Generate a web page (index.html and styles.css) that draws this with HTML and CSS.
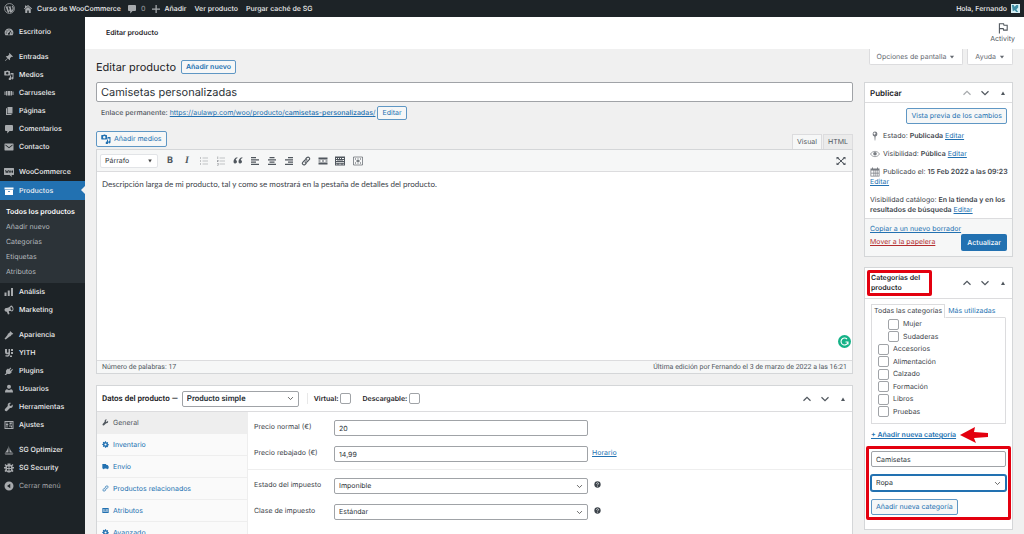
FILE: index.html
```
<!DOCTYPE html>
<html lang="es">
<head>
<meta charset="UTF-8">
<meta name="viewport" content="width=device-width, initial-scale=1.0">
<title>Editar producto</title>
<link rel="stylesheet" href="styles.css">
</head>
<body>

<svg class="sprite" aria-hidden="true">
<symbol id="i-wp" viewBox="0 0 20 20"><circle cx="10" cy="10" r="9" fill="none" stroke="currentColor" stroke-width="1.4"/><path d="M3 6.500h4.500v1H6.500l2.400 7 1.300-3.700L9 7.500H8v-1h5v1h-1l2.400 7 1.200-4c.6-2-1.300-2.700-1-4.300.1-.8.700-1.100 1.200-1.100A7.800 7.800 0 0 1 14 16.700l-3.200.9-.6-4-1.400 4.200-2-.6z"/></symbol>
<symbol id="i-home" viewBox="0 0 20 20"><path d="M10 2l8 7-1.200 1.400L10 4.600l-6.800 5.800L2 9zM4 3h2.500v3L4 8zM4.500 10.500L10 6l5.500 4.500V18h-4v-5h-3v5h-4z"/></symbol>
<symbol id="i-comment" viewBox="0 0 20 20"><path d="M4 2h12c1 0 2 1 2 2v8c0 1-1 2-2 2h-5l-4.500 5v-5H4c-1 0-2-1-2-2V4c0-1 1-2 2-2z"/></symbol>
<symbol id="i-plus" viewBox="0 0 20 20"><path d="M9 2h2.500v7H18v2.500h-6.500V18H9v-6.500H2V9h7z"/></symbol>
<symbol id="i-dash" viewBox="0 0 20 20"><path fill-rule="evenodd" d="M10 3a8.500 8.500 0 0 1 7 13.500H3A8.500 8.500 0 0 1 10 3zm-1 2v2h2V5zM5 7v2h2V7zm8 0l-3 4.500a2 2 0 1 0 1.500.8L14.500 8zM3.500 11v2h2v-2zm11 0v2h2v-2z"/></symbol>
<symbol id="i-pin" viewBox="0 0 20 20"><path d="M11 2l7 7-1.500 1-1.500-.5-3 3c.5 1.500.2 3-.8 4L7.700 13 3 18l-1-1 5-4.700L3.500 9c1-1 2.500-1.300 4-.8l3-3L10 3.500z"/></symbol>
<symbol id="i-media" viewBox="0 0 20 20"><path fill-rule="evenodd" d="M3 2h2l.6-1h2.800L9 2h2c.6 0 1 .4 1 1v7c0 .6-.4 1-1 1H1.500c-.6 0-1-.4-1-1V3c0-.6.400-1 1-1zm3.500 2a2.500 2.500 0 1 0 0 5 2.500 2.500 0 0 0 0-5zM13 6h6v10.500a2.300 2.300 0 1 1-2-2.300V9h-3v8.500a2.300 2.300 0 1 1-4.500 0 2.200 2.200 0 0 1 2.500-2.300V12h1z"/></symbol>
<symbol id="i-car" viewBox="0 0 20 20"><path d="M1 7h2v7H1zM4 6h2v9H4zM7 6h6v9H7zM14 6h2v9h-2zM17 7h2v7h-2z"/></symbol>
<symbol id="i-pages" viewBox="0 0 20 20"><path d="M7 2h10v13H7zM4 4.500h2V16h9v2H4z"/></symbol>
<symbol id="i-mail" viewBox="0 0 20 20"><path fill-rule="evenodd" d="M2 3h16c.6 0 1 .4 1 1v12c0 .6-.4 1-1 1H2c-.6 0-1-.4-1-1V4c0-.6.4-1 1-1zm1 2v2l7 5.500L17 7V5l-7 5.300z"/></symbol>
<symbol id="i-woo" viewBox="0 0 20 20"><path fill-rule="evenodd" d="M1 2h18c.6 0 1 .4 1 1v12c0 .6-.4 1-1 1h-4l1 4-5-4H1c-.6 0-1-.4-1-1V3c0-.6.4-1 1-1zm1.500 4l1.200 6H5l1-3 1 3h1.300l1.200-6H8.200l-.6 3.500L6.600 7H5.400l-1 2.500L3.800 6zM12 6.500c-2.200 0-2.200 5.500 0 5.500s2.200-5.500 0-5.500zm4.500 0c-2.200 0-2.200 5.500 0 5.500s2.200-5.500 0-5.500z"/></symbol>
<symbol id="i-box" viewBox="0 0 20 20"><path fill-rule="evenodd" d="M1 3h18v4H1zM2 8h16v10H2zm6 2v1.500h4V10z"/></symbol>
<symbol id="i-bars" viewBox="0 0 20 20"><path d="M1 11h4v7H1zM7.500 7h4v11h-4zM14 2h4v16h-4z"/></symbol>
<symbol id="i-horn" viewBox="0 0 20 20"><path fill-rule="evenodd" d="M14 1c3 0 5 4 5 7s-1.500 5-3.500 5c-2-1-4-1-6-.7L11 18l-3 1-2.300-5.500C3 14 1 12 1 9.500 1 7 3 6 5 6c4-.5 6-2 9-5zm-.5 3c-1.500 2 0 6 2 7 1.500-1 2-2 1.500-4-.500-2-2-3.500-3.500-3z"/></symbol>
<symbol id="i-brush" viewBox="0 0 20 20"><path d="M12 2l6.500 5.500L17 9l-1-.3-3 3.800c-1-.5-2-.2-2.500 1L3.500 19 1 17.500l5.500-7c1-.5 1.300-1.500.8-2.500L11.500 5z"/></symbol>
<symbol id="i-yith" viewBox="0 0 20 20"><path d="M2 2h4v6c0 2 3 2 3 0V2h3v9c0 6-4 7-9 6v-3c3 1 6 1 6-2-4 1.500-7 0-7-4zM14 2h4v4h-4zM14 8h4v4h-4zM12 15h4v3h-4z"/></symbol>
<symbol id="i-plug" viewBox="0 0 20 20"><path d="M13 3l1.500 1.500L11.500 8l1.500 1.500L16.500 6 18 7.500 14.500 11l1 1c-2 4-6 5-9 3.500L4 18H1l3.500-4C3 11 4 7 8 5l1.500 1.500z"/></symbol>
<symbol id="i-user" viewBox="0 0 20 20"><path d="M10 1.500a4 4 0 1 1 0 8 4 4 0 0 1 0-8zM6 10.500l4 2 4-2c3 0 4 2.500 4 6.500H2c0-4 1-6.500 4-6.500z"/></symbol>
<symbol id="i-tool" viewBox="0 0 20 20"><path d="M17 5l-3 3-2.500-.5L11 5l3-3c-3-1-6 .5-6.500 3v3L2 14c-2 2.500 1.500 5.500 4 4l6-6c4 1 7-3 5-7z"/></symbol>
<symbol id="i-set" viewBox="0 0 20 20"><path fill-rule="evenodd" d="M1 2h18v16H1zm2 2v12h14V4zM5 5h2v3h1.500v2H7v5H5v-5H4V8h1zM11 5h5v2h-1v2h-4zM10 11h6v4h-2v-2h-4z"/></symbol>
<symbol id="i-sgo" viewBox="0 0 20 20"><path d="M9 1v14H2C6 12 8 7 9 1zM11 4c1 6 3 9 7 11h-7zM1 17h18l-2 2H3z"/></symbol>
<symbol id="i-gear" viewBox="0 0 20 20"><path fill-rule="evenodd" d="M8.500 1h3l.5 2.500 1.500.6 2.200-1.400 2 2-1.300 2.200.6 1.600 2.500.5v3l-2.500.5-.6 1.500 1.400 2.200-2 2-2.300-1.300-1.500.6L11.500 19h-3L8 16.500l-1.500-.6-2.200 1.400-2-2 1.300-2.300L3 11.500.5 11V8.500L3 8l.6-1.500-1.400-2.200 2-2 2.300 1.300L8 3.300zM10 7a3 3 0 1 0 0 6 3 3 0 0 0 0-6z"/></symbol>
<symbol id="i-bug" viewBox="0 0 20 20"><path fill-rule="evenodd" d="M7 1h6v3h2l2-2 2 2-2 2v2h3v3h-3v2l2 3-2 2-2-1-3 2H8l-3-2-2 1-2-2 2-3v-2H0V8h3V6L1 4l2-2 2 2h2zM6 7v3h3V7zm5 0v3h3V7zm-5 5v3h3v-3zm5 0v3h3v-3z"/></symbol>
<symbol id="i-back" viewBox="0 0 20 20"><path fill-rule="evenodd" d="M10 1a9 9 0 1 1 0 18 9 9 0 0 1 0-18zm2.500 4.500L6 10l6.500 4.500z"/></symbol>
<symbol id="i-up" viewBox="0 0 20 20"><path d="M3 13.500l7-7 7 7" fill="none" stroke="currentColor" stroke-width="2.400"/></symbol>
<symbol id="i-down" viewBox="0 0 20 20"><path d="M3 6.500l7 7 7-7" fill="none" stroke="currentColor" stroke-width="2.400"/></symbol>
<symbol id="i-tri" viewBox="0 0 20 20"><path d="M6 14l4-7 4 7z"/></symbol>
<symbol id="i-trid" viewBox="0 0 20 20"><path d="M3 6h14l-7 9z"/></symbol>
<symbol id="i-flag" viewBox="0 0 20 20"><path d="M4 19V3h7l.6 2.500H17v8h-6L10.400 11H4" fill="none" stroke="currentColor" stroke-width="1.800"/></symbol>
<symbol id="i-ul" viewBox="0 0 20 20"><path d="M2 3h2v2H2zM2 9h2v2H2zM2 15h2v2H2zM7 3.300h11v1.300H7zM7 9.300h11v1.300H7zM7 15.300h11v1.300H7z"/></symbol>
<symbol id="i-ol" viewBox="0 0 20 20"><path d="M3 1h1.300v5H3zM2 8h3v1.500L3.500 11H5v1H2v-1l1.500-2H2zM2 14h3v5H2v-1h2v-1H3v-1h1v-1H2zM7 3.300h11v1.300H7zM7 9.300h11v1.300H7zM7 15.300h11v1.300H7z"/></symbol>
<symbol id="i-quote" viewBox="0 0 20 20"><path d="M9 4C6 5 5.500 6.500 5.500 8.200A3.500 3.500 0 1 1 1 12C1 7 3.500 3.500 8.500 2.500zM19 4c-3 1-3.500 2.500-3.500 4.200A3.500 3.500 0 1 1 11 12c0-5 2.500-8.500 7.500-9.500z"/></symbol>
<symbol id="i-left" viewBox="0 0 20 20"><path d="M2 2h10v2.300H2zM2 6.500h16v2.300H2zM2 11h10v2.300H2zM2 15.500h16v2.300H2z"/></symbol>
<symbol id="i-center" viewBox="0 0 20 20"><path d="M5 2h10v2.300H5zM2 6.500h16v2.300H2zM5 11h10v2.300H5zM2 15.500h16v2.300H2z"/></symbol>
<symbol id="i-right" viewBox="0 0 20 20"><path d="M8 2h10v2.300H8zM2 6.500h16v2.300H2zM8 11h10v2.300H8zM2 15.500h16v2.300H2z"/></symbol>
<symbol id="i-link" viewBox="0 0 20 20"><path d="M9 6l3-3c3-2.500 7 1.500 4.500 4.500l-4 4c-1.500 1.500-3.500 1.500-5 0M11 14l-3 3c-3 2.500-7-1.500-4.500-4.500l4-4c1.500-1.500 3.500-1.500 5 0" fill="none" stroke="currentColor" stroke-width="2.200"/></symbol>
<symbol id="i-more" viewBox="0 0 20 20"><path d="M1 3h18v4H1zM1 9h4v2H1zM8 9h4v2H8zM15 9h4v2h-4zM1 13h18v4H1z"/></symbol>
<symbol id="i-keys" viewBox="0 0 20 20"><path fill-rule="evenodd" d="M0 1h20v18H0zm2 3v2h2V4zm4 0v2h2V4zm4 0v2h2V4zm4 0v2h4V4zM2 8v2h3V8zm5 0v2h2V8zm4 0v2h2V8zm4 0v2h3V8zM2 12v1.500h16V12zm0 3.500V17h3v-1.500zm5 0V17h6v-1.500zm8 0V17h3v-1.500z"/></symbol>
<symbol id="i-short" viewBox="0 0 20 20"><path d="M1 2h18v16H1z" fill="none" stroke="currentColor" stroke-width="1.300"/><path d="M4 5h2v2H4zM9 5h2v2H9zM14 5h2v2h-2zM4 13h2v2H4zM9 13h2v2H9zM14 13h2v2h-2zM7 8.500h6v3H7z"/></symbol>
<symbol id="i-full" viewBox="0 0 20 20"><path d="M1 2h5L4.700 3.500 8.500 7 7 8.500 3 5 1 7zM19 2h-5l1.300 1.500L11.500 7 13 8.500 17 5l2 2zM1 18h5l-1.300-1.500L8.500 13 7 11.500 3 15l-2-2zM19 18h-5l1.300-1.500L11.500 13l1.500-1.500 4 3.500 2-2zM8 8h4v4H8z"/></symbol>
<symbol id="i-post" viewBox="0 0 20 20"><path fill-rule="evenodd" d="M10 1a5 5 0 0 1 1.200 9.800L10.500 19h-1l-.7-8.200A5 5 0 0 1 10 1zM9 3a2 2 0 1 0 .1 0z"/></symbol>
<symbol id="i-eye" viewBox="0 0 20 20"><path d="M1 10c4-7 14-7 18 0-4 7-14 7-18 0z" fill="none" stroke="currentColor" stroke-width="1.400"/><circle cx="10" cy="9.500" r="3.600"/></symbol>
<symbol id="i-cal" viewBox="0 0 20 20"><path fill-rule="evenodd" d="M1 3h3V1h2v2h8V1h2v2h3v16H1zm1.500 4v4.500H6V7zM7 7v4.500h2.500V7zm4 0v4.500h2.500V7zm4 0v4.500h2.500V7zM2.500 13v4.500H6V13zM7 13v4.500h2.500V13zm4 0v4.500h2.500V13zm4 0v4.500h2.500V13z"/></symbol>
<symbol id="i-truck" viewBox="0 0 20 20"><path d="M1 3h11v3h4l3 4v6h-2a2 2 0 0 1-4 0H7a2 2 0 0 1-4 0H1z"/></symbol>
<symbol id="i-card" viewBox="0 0 20 20"><path fill-rule="evenodd" d="M1 3h18v14H1zm2 4v3h5V7zm7 0v1.500h7V7zm0 3v1.500h7V10zm-7 3v1.500h14V13z"/></symbol>
<symbol id="i-help" viewBox="0 0 20 20"><circle cx="10" cy="10" r="9"/><path d="M7 8c0-4 6-4 6-.5 0 2-3 2-3 4.500M10 13.500V16" fill="none" stroke="#fff" stroke-width="2"/></symbol>
</svg>

<header class="adminbar">
<a href="#" class="bar-logo" aria-label="WordPress"><svg class="icon"><use href="#i-wp"/></svg></a>
<a href="#" class="bar-site"><svg class="icon"><use href="#i-home"/></svg>Curso de WooCommerce</a>
<a href="#" class="bar-comments"><svg class="icon"><use href="#i-comment"/></svg>0</a>
<a href="#" class="bar-new"><svg class="icon"><use href="#i-plus"/></svg>Añadir</a>
<a href="#">Ver producto</a>
<a href="#">Purgar caché de SG</a>
<a href="#" class="bar-user">Hola, Fernando
<svg class="avatar" viewBox="0 0 10 10"><rect width="10" height="10" fill="#d5eef3"/><path d="M1 1h2l1 2 2-2h2v3L6 6l2 3H6L4 7 2 8z" fill="#3f8fa6"/></svg></a>
</header>

<div class="layout">
<nav class="menu">
<a href="#"><svg class="icon"><use href="#i-dash"/></svg>Escritorio</a>
<a href="#" class="gap"><svg class="icon"><use href="#i-pin"/></svg>Entradas</a>
<a href="#"><svg class="icon"><use href="#i-media"/></svg>Medios</a>
<a href="#"><svg class="icon"><use href="#i-car"/></svg>Carruseles</a>
<a href="#"><svg class="icon"><use href="#i-pages"/></svg>Páginas</a>
<a href="#"><svg class="icon"><use href="#i-comment"/></svg>Comentarios</a>
<a href="#"><svg class="icon"><use href="#i-mail"/></svg>Contacto</a>
<a href="#" class="gap"><svg class="icon"><use href="#i-woo"/></svg>WooCommerce</a>
<a href="#" class="current"><svg class="icon"><use href="#i-box"/></svg>Productos</a>
<div class="submenu">
<a href="#" class="active">Todos los productos</a>
<a href="#">Añadir nuevo</a>
<a href="#">Categorías</a>
<a href="#">Etiquetas</a>
<a href="#">Atributos</a>
</div>
<a href="#"><svg class="icon"><use href="#i-bars"/></svg>Análisis</a>
<a href="#"><svg class="icon"><use href="#i-horn"/></svg>Marketing</a>
<a href="#" class="gap"><svg class="icon"><use href="#i-brush"/></svg>Apariencia</a>
<a href="#"><svg class="icon"><use href="#i-yith"/></svg>YITH</a>
<a href="#"><svg class="icon"><use href="#i-plug"/></svg>Plugins</a>
<a href="#"><svg class="icon"><use href="#i-user"/></svg>Usuarios</a>
<a href="#"><svg class="icon"><use href="#i-tool"/></svg>Herramientas</a>
<a href="#"><svg class="icon"><use href="#i-set"/></svg>Ajustes</a>
<a href="#" class="gap"><svg class="icon"><use href="#i-sgo"/></svg>SG Optimizer</a>
<a href="#"><svg class="icon"><use href="#i-bug"/></svg>SG Security</a>
<button type="button" class="collapse"><svg class="icon"><use href="#i-back"/></svg>Cerrar menú</button>
</nav>

<main class="content">
<div class="page-header">
<strong>Editar producto</strong>
<button type="button" class="activity"><svg class="icon"><use href="#i-flag"/></svg>Activity</button>
</div>

<div class="wrap">
<div class="main-col">
<div class="heading">
<h1>Editar producto</h1>
<a href="#" class="button small bold">Añadir nuevo</a>
</div>
<input type="text" class="title-input" value="Camisetas personalizadas" aria-label="Nombre del producto">
<div class="permalink">
<strong>Enlace permanente:</strong>
<a href="#">https://aulawp.com/woo/producto/<b>camisetas-personalizadas</b>/</a>
<button type="button" class="button small">Editar</button>
</div>

<div class="editor-top">
<button type="button" class="button media"><svg class="icon"><use href="#i-media"/></svg>Añadir medios</button>
<div class="editor-tabs">
<button type="button" class="on">Visual</button>
<button type="button">HTML</button>
</div>
</div>
<section class="editor">
<div class="toolbar">
<select aria-label="Formato"><option>Párrafo</option></select>
<button type="button" class="letter" aria-label="Negrita"><b>B</b></button>
<button type="button" class="letter italic" aria-label="Cursiva"><i>I</i></button>
<button type="button" class="soft" aria-label="Lista"><svg class="icon"><use href="#i-ul"/></svg></button>
<button type="button" class="soft" aria-label="Lista numerada"><svg class="icon"><use href="#i-ol"/></svg></button>
<button type="button" aria-label="Cita"><svg class="icon"><use href="#i-quote"/></svg></button>
<button type="button" aria-label="Izquierda"><svg class="icon"><use href="#i-left"/></svg></button>
<button type="button" aria-label="Centro"><svg class="icon"><use href="#i-center"/></svg></button>
<button type="button" aria-label="Derecha"><svg class="icon"><use href="#i-right"/></svg></button>
<button type="button" aria-label="Enlace"><svg class="icon"><use href="#i-link"/></svg></button>
<button type="button" aria-label="Leer más"><svg class="icon"><use href="#i-more"/></svg></button>
<button type="button" aria-label="Barra de herramientas"><svg class="icon"><use href="#i-keys"/></svg></button>
<button type="button" class="split" aria-label="Shortcodes"><svg class="icon"><use href="#i-short"/></svg></button>
<button type="button" class="full" aria-label="Pantalla completa"><svg class="icon"><use href="#i-full"/></svg></button>
</div>
<div class="editor-body">
<p>Descripción larga de mi producto, tal y como se mostrará en la pestaña de detalles del producto.</p>
<svg class="grammar" viewBox="0 0 26 26"><circle cx="13" cy="13" r="13" fill="#15b287"/><path d="M18 8a7 7 0 1 0 2 6h-5M20 14v5" fill="none" stroke="#fff" stroke-width="2.200"/></svg>
</div>
<div class="status"><span>Número de palabras: 17</span><span>Última edición por Fernando el 3 de marzo de 2022 a las 16:21</span></div>
</section>

<section class="box product">
<div class="product-head">
<label for="type" class="product-title">Datos del producto —</label>
<select id="type"><option>Producto simple</option></select>
<label class="check first">Virtual: <input type="checkbox"></label>
<label class="check">Descargable: <input type="checkbox"></label>
<div class="handles"><svg class="icon"><use href="#i-up"/></svg><svg class="icon"><use href="#i-down"/></svg><svg class="icon"><use href="#i-tri"/></svg></div>
</div>
<div class="product-body">
<div class="product-tabs">
<a href="#" class="on"><svg class="icon"><use href="#i-tool"/></svg>General</a>
<a href="#"><svg class="icon"><use href="#i-gear"/></svg>Inventario</a>
<a href="#"><svg class="icon"><use href="#i-truck"/></svg>Envío</a>
<a href="#"><svg class="icon"><use href="#i-link"/></svg>Productos relacionados</a>
<a href="#"><svg class="icon"><use href="#i-card"/></svg>Atributos</a>
<a href="#"><svg class="icon"><use href="#i-gear"/></svg>Avanzado</a>
</div>
<div class="product-panel">
<div class="fields">
<label for="price">Precio normal (€)</label><input type="text" id="price" value="20"><span></span>
<label for="sale">Precio rebajado (€)</label><input type="text" id="sale" value="14,99"><a href="#">Horario</a>
</div>
<div class="fields">
<label for="tax">Estado del impuesto</label><select id="tax"><option>Imponible</option></select><svg class="icon help"><use href="#i-help"/></svg>
<label for="class">Clase de impuesto</label><select id="class"><option>Estándar</option></select><svg class="icon help"><use href="#i-help"/></svg>
</div>
</div>
</div>
</section>
</div>

<aside class="side-col">
<div class="screen-tabs">
<button type="button">Opciones de pantalla <svg class="icon"><use href="#i-trid"/></svg></button>
<button type="button">Ayuda <svg class="icon"><use href="#i-trid"/></svg></button>
</div>

<section class="box publish">
<div class="box-head">
<h2>Publicar</h2>
<div class="handles"><svg class="icon dim"><use href="#i-up"/></svg><svg class="icon"><use href="#i-down"/></svg><svg class="icon"><use href="#i-tri"/></svg></div>
</div>
<div class="publish-body">
<button type="button" class="button preview">Vista previa de los cambios</button>
<p><svg class="icon"><use href="#i-post"/></svg>Estado: <b>Publicada</b> <a href="#">Editar</a></p>
<p><svg class="icon"><use href="#i-eye"/></svg>Visibilidad: <b>Pública</b> <a href="#">Editar</a></p>
<p><svg class="icon"><use href="#i-cal"/></svg>Publicado el: <b>15 Feb 2022 a las 09:23</b> <a href="#">Editar</a></p>
<p>Visibilidad catálogo: <b>En la tienda y en los resultados de búsqueda</b> <a href="#">Editar</a></p>
</div>
<div class="publish-foot">
<a href="#">Copiar a un nuevo borrador</a>
<div class="foot-row">
<a href="#" class="trash">Mover a la papelera</a>
<button type="button" class="primary">Actualizar</button>
</div>
</div>
</section>

<section class="box cats">
<div class="box-head">
<h2 class="marked">Categorías del producto</h2>
<div class="handles"><svg class="icon"><use href="#i-up"/></svg><svg class="icon"><use href="#i-down"/></svg><svg class="icon"><use href="#i-tri"/></svg></div>
</div>
<div class="cats-body">
<div class="cat-tabs"><a href="#" class="on">Todas las categorías</a><a href="#">Más utilizadas</a></div>
<div class="cat-list">
<label class="child"><input type="checkbox">Mujer</label>
<label class="child"><input type="checkbox">Sudaderas</label>
<label><input type="checkbox">Accesorios</label>
<label><input type="checkbox">Alimentación</label>
<label><input type="checkbox">Calzado</label>
<label><input type="checkbox">Formación</label>
<label><input type="checkbox">Libros</label>
<label><input type="checkbox">Pruebas</label>
</div>
<div class="add-line">
<a href="#">+ Añadir nueva categoría</a>
<svg class="arrow" viewBox="0 0 28 16"><path d="M0 8L15 0l-1 5 14 1v4l-14 1 2 5z" fill="#e3000f"/></svg>
</div>
<div class="new-cat">
<input type="text" value="Camisetas" aria-label="Nueva categoría">
<select class="focused" aria-label="Categoría superior"><option>Ropa</option></select>
<button type="button" class="button">Añadir nueva categoría</button>
</div>
</div>
</section>
</aside>
</div>
</main>
</div>

</body>
</html>
```

FILE: styles.css
```
* {
box-sizing: border-box;
}
body {
font-family: Inter, "Liberation Sans", sans-serif;
font-size: 7px;
line-height: 10px;
text-rendering: geometricPrecision;
background: #f0f0f0;
color: #3c434a;
margin: 0;
height: 100vh;
overflow: hidden;
}
h1, h2, p {
margin: 0;
}
a {
color: #2271b1;
}
button, input, select {
font: inherit;
color: inherit;
text-rendering: inherit;
margin: 0;
}
button {
background: none;
border: none;
padding: 0;
}
.sprite {
display: none;
}
.icon {
width: 10px;
height: 10px;
fill: currentColor;
flex: none;
}
input[type="text"], select {
border: 1px solid #a0a3a7;
border-radius: 2px;
background: #fff;
color: #2c3338;
padding: 0 4px;
height: 16px;
min-width: 0;
}
select {
appearance: none;
background: #fff url("data:image/svg+xml,%3Csvg xmlns='http://www.w3.org/2000/svg' viewBox='0 0 20 20'%3E%3Cpath d='M3 6l7 7 7-7' fill='none' stroke='%23555' stroke-width='2.500'/%3E%3C/svg%3E") no-repeat right 4px center / 7px 7px;
}
input[type="checkbox"] {
appearance: none;
width: 11px;
height: 11px;
border: 1px solid #a0a3a7;
border-radius: 2px;
background: #fff;
flex: none;
}

/* barra superior */
.adminbar {
display: flex;
align-items: center;
height: 17px;
padding: 0 4px;
background: #1d2327;
}
.adminbar a {
display: flex;
align-items: center;
gap: 4px;
margin-right: 8px;
color: #f0f0f1;
font-weight: 500;
text-decoration: none;
}
.adminbar .icon {
color: #a7aaad;
}
.adminbar .bar-logo {
margin-right: 8px;
}
.bar-logo .icon {
width: 11px;
height: 11px;
}
.adminbar .bar-comments {
color: #8c8f94;
margin-right: 5px;
}
.adminbar .bar-site {
margin-right: 6px;
}
.adminbar .bar-user {
margin: 0 0 0 auto;
}
.avatar {
width: 9px;
height: 9px;
}

/* menu lateral */
.layout {
display: flex;
height: calc(100vh - 17px);
}
.menu {
width: 85px;
flex: none;
padding-top: 6px;
background: #1d2327;
}
.menu > a, .collapse {
display: flex;
align-items: center;
gap: 5px;
width: 100%;
height: 18px;
padding-left: 4px;
color: #f0f0f1;
font-weight: 500;
text-decoration: none;
}
.menu .icon {
color: #a7aaad;
}
.menu > .gap {
margin-top: 7px;
}
.menu > .current {
position: relative;
height: 19px;
background: #2271b1;
}
.menu .current .icon {
color: #fff;
}
.current::after {
content: "";
position: absolute;
right: 0;
top: 5px;
border: 4px solid transparent;
border-right-color: #f0f0f0;
border-left: 0;
}
.submenu {
display: flex;
flex-direction: column;
padding: 4px 0 4px 6px;
background: #2c3338;
}
.submenu a {
line-height: 15px;
color: #b4b9be;
text-decoration: none;
}
.submenu .active {
color: #fff;
font-weight: 600;
}
.collapse {
color: #a7aaad;
font-weight: 400;
}

/* cabecera */
.content {
flex: 1;
min-width: 0;
}
.page-header {
display: flex;
align-items: center;
justify-content: space-between;
height: 32px;
padding: 0 9px 0 21px;
background: #fff;
color: #1d2327;
}
.page-header strong {
font-weight: 600;
}
.activity {
display: flex;
flex-direction: column;
align-items: center;
color: #50575e;
}
.activity .icon {
width: 12px;
height: 12px;
}
.wrap {
display: flex;
align-items: flex-start;
gap: 11px;
padding: 0 11px;
}
.main-col {
flex: 1;
min-width: 0;
}
.side-col {
width: 149px;
flex: none;
}
.button {
display: inline-flex;
align-items: center;
justify-content: center;
height: 16px;
padding: 0 4px;
border: 1px solid #5f97c4;
border-radius: 2px;
background: #f6f7f7;
color: #2271b1;
text-decoration: none;
}
.button.small {
height: 14px;
}
.bold {
font-weight: 600;
}
.heading {
display: flex;
align-items: center;
gap: 5px;
padding: 11px 0 8px;
}
h1 {
font-size: 11px;
line-height: 14px;
font-weight: 400;
color: #1d2327;
}
input.title-input {
width: 100%;
height: 20px;
font-size: 11px;
}
.permalink {
display: flex;
align-items: center;
gap: 2px;
padding: 4px 5px 11px;
color: #50575e;
}
.permalink strong {
font-weight: 500;
}
.permalink b {
font-weight: 500;
}

/* editor */
.editor-top {
display: flex;
align-items: flex-start;
justify-content: space-between;
height: 18px;
}
.media {
gap: 3px;
}
.editor-tabs {
display: flex;
align-self: flex-end;
gap: 1px;
}
.editor-tabs button {
height: 15px;
padding: 0 4px;
border: 1px solid #dcdcde;
border-bottom: none;
background: #ebebeb;
color: #50575e;
}
.editor-tabs .on {
background: #f6f7f7;
}
.editor {
border: 1px solid #d4d6d8;
background: #fff;
}
.toolbar {
display: flex;
align-items: center;
gap: 7px;
height: 22px;
padding: 0 6px 0 3px;
border-bottom: 1px solid #dcdcde;
background: #f6f7f7;
}
.toolbar select {
width: 58px;
height: 14px;
border-color: #e2e4e7;
background-image: url("data:image/svg+xml,%3Csvg xmlns='http://www.w3.org/2000/svg' viewBox='0 0 20 20'%3E%3Cpath d='M4 5h12l-6 10z' fill='%23444'/%3E%3C/svg%3E");
background-size: 6px 6px;
}
.toolbar button {
display: flex;
justify-content: center;
width: 10px;
color: #50575e;
}
.toolbar .soft {
color: #8c8f94;
}
.letter {
font-size: 9px;
}
.italic {
font-family: "Liberation Serif", serif;
font-size: 10px;
font-weight: 700;
}
.toolbar .split {
margin-left: 1px;
}
.toolbar .full {
margin-left: auto;
}
.editor-body {
position: relative;
height: 188px;
padding: 6px 5px;
font-family: Lato, "Noto Sans", sans-serif;
font-size: 8px;
line-height: 12px;
}
.grammar {
position: absolute;
right: 1px;
bottom: 12px;
width: 13px;
height: 13px;
}
.status {
display: flex;
justify-content: space-between;
padding: 1px 5px;
border-top: 1px solid #dcdcde;
background: #f6f7f7;
color: #50575e;
font-family: Roboto, "Liberation Sans", sans-serif;
}

/* cajas */
.box {
border: 1px solid #d4d6d8;
background: #fff;
}
.handles {
display: flex;
align-items: center;
gap: 8px;
color: #50575e;
}
.handles .dim {
color: #a7aaad;
}
.product {
margin-top: 11px;
}
.product-head {
display: flex;
align-items: center;
height: 26px;
padding: 0 4px 0 5px;
border-bottom: 1px solid #dcdcde;
color: #1d2327;
font-weight: 600;
}
.product-title, .product-head select {
font-family: Roboto, "Liberation Sans", sans-serif;
font-size: 8px;
}
.product-head select {
width: 117px;
margin: 0 8px 0 4px;
}
.check {
display: flex;
align-items: center;
gap: 2px;
padding-right: 11px;
}
.check.first {
padding-left: 6px;
border-left: 1px solid #e8e8e8;
}
.product-head .handles {
margin-left: auto;
}
.product-body {
display: flex;
}
.product-tabs {
width: 151px;
flex: none;
border-right: 1px solid #eee;
background: #fafafa;
}
.product-tabs a {
display: flex;
align-items: center;
gap: 4px;
height: 22px;
padding-left: 5px;
border-bottom: 1px solid #eee;
text-decoration: none;
}
.product-tabs .icon {
width: 7px;
height: 7px;
}
.product-tabs .on {
background: #eee;
color: #50575e;
}
.product-panel {
flex: 1;
}
.fields {
display: grid;
grid-template-columns: 76px 254px 1fr;
column-gap: 4px;
row-gap: 10px;
padding: 8px 6px 7px;
border-bottom: 1px solid #eee;
}
.fields + .fields {
border: none;
}
.fields label, .fields a {
padding-top: 2px;
}
.help {
width: 7px;
height: 7px;
margin: 3px 0 0 2px;
}

/* columna derecha */
.screen-tabs {
display: flex;
justify-content: flex-end;
gap: 4px;
margin-bottom: 17px;
}
.screen-tabs button {
display: flex;
align-items: center;
gap: 3px;
height: 16px;
padding: 0 7px;
border: 1px solid #dcdcde;
border-top: none;
border-radius: 0 0 2px 2px;
background: #fff;
color: #646970;
white-space: nowrap;
}
.screen-tabs .icon {
width: 6px;
height: 6px;
}
.box-head {
display: flex;
align-items: center;
justify-content: space-between;
height: 20px;
padding: 0 4px 0 5px;
border-bottom: 1px solid #dcdcde;
}
.box-head h2 {
font-size: 8px;
line-height: 10px;
font-weight: 600;
color: #1d2327;
}
.publish-body {
display: flex;
flex-direction: column;
gap: 8px;
padding: 5px 1px 3px 5px;
}
.preview {
align-self: flex-end;
margin: 0 4px -1px 0;
}
.publish-body p .icon {
vertical-align: top;
margin-right: 3px;
color: #787c82;
}
.publish-body b {
font-weight: 600;
}
.publish-foot {
padding: 5px;
border-top: 1px solid #dcdcde;
background: #f6f7f7;
}
.foot-row {
display: flex;
justify-content: space-between;
}
.foot-row .trash {
color: #b32d2e;
padding-top: 3px;
}
.primary {
height: 17px;
padding: 0 6px;
border-radius: 2px;
background: #2271b1;
color: #fff;
font-weight: 500;
}
.cats {
margin-top: 10px;
}
.cats .box-head {
height: 31px;
padding-left: 2px;
}
.box-head .marked {
width: 65px;
padding: 0 1px;
border: 3px solid #e3000f;
border-radius: 2px;
font-size: 7px;
}
.cats-body {
padding: 5px 1px 9px;
}
.cat-tabs {
display: flex;
margin: 0 5px;
}
.cat-tabs a {
height: 14px;
padding: 1px 2px;
border: 1px solid transparent;
border-bottom-color: #dcdcde;
text-decoration: none;
white-space: nowrap;
}
.cat-tabs a:last-child {
flex: 1;
}
.cat-tabs .on {
border: 1px solid #dcdcde;
border-bottom: none;
color: #3c434a;
}
.cat-list {
display: grid;
grid-auto-rows: 1fr;
height: 106px;
margin: 0 5px;
padding: 0 6px 5px;
border: 1px solid #dcdcde;
border-top: none;
}
.cat-list label {
display: flex;
align-items: center;
gap: 4px;
}
.cat-list .child {
padding-left: 10px;
}
.add-line {
display: flex;
align-items: center;
gap: 4px;
padding: 3px 5px;
font-weight: 600;
}
.arrow {
width: 28px;
height: 16px;
}
.new-cat {
display: flex;
flex-direction: column;
align-items: flex-start;
gap: 8px;
padding: 2px;
border: 3px solid #e3000f;
border-radius: 2px;
}
.new-cat input, .new-cat select {
width: 100%;
}
.new-cat .focused {
border-color: #2271b1;
box-shadow: 0 0 0 1px #2271b1;
}
```
